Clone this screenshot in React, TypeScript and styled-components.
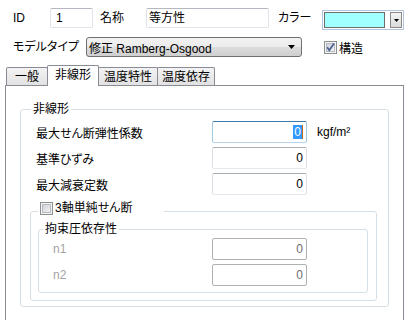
import React from 'react';
import styled, { createGlobalStyle } from 'styled-components';

const GlobalStyle = createGlobalStyle`
  html, body {
    margin: 0;
    padding: 0;
    background: #fff;
  }

  body {
    font-family: 'Liberation Sans', 'Noto Sans CJK JP', sans-serif;
    font-size: 12px;
    font-feature-settings: 'palt';
    color: #000;
  }
`;

type FieldState = 'normal' | 'focused' | 'disabled';

function CheckBox({ checked }: { checked?: boolean }) {
  return (
    <svg width='13' height='13' viewBox='0 0 13 13'>
      <defs>
        <linearGradient id={checked ? 'cbOn' : 'cbOff'} x1='0' y1='0' x2='1' y2='1'>
          <stop offset='0' stopColor='#cbcfd5' />
          <stop offset='1' stopColor='#f6f6f6' />
        </linearGradient>
      </defs>
      <rect x='0.5' y='0.5' width='12' height='12' fill='#f4f4f4' stroke='#8e8f8f' />
      <rect x='2.5' y='2.5' width='8' height='8' fill={`url(#${checked ? 'cbOn' : 'cbOff'})`} stroke='#b8bcc2' />
      {checked && <path d='M3.2 6.2 L5.3 9.2 L10 2.6' fill='none' stroke='#4c5f92' strokeWidth='1.7' />}
    </svg>
  );
}

function DownArrow({ size }: { size: number }) {
  return (
    <svg width={size} height={Math.ceil(size / 2)} viewBox={`0 0 ${size} ${Math.ceil(size / 2)}`}>
      <path d={`M0 0 L${size} 0 L${size / 2} ${Math.ceil(size / 2)} Z`} fill='#000' />
    </svg>
  );
}

function Field({ value, state = 'normal' }: { value: string; state?: FieldState }) {
  return (
    <FieldBox $state={state}>
      {state === 'focused' ? (
        <>
          <Selected>{value}</Selected>
          <Caret />
        </>
      ) : (
        value
      )}
    </FieldBox>
  );
}

function App() {
  return (
    <Page>
      <GlobalStyle />
      <Header>
        <Row>
          <Caption $width={37}>ID</Caption>
          <TextBox $width={43} $indent={5}>1</TextBox>
          <Caption $width={53} $indent={7}>名称</Caption>
          <TextBox $width={123} $indent={2}>等方性</TextBox>
          <Caption $width={53} $indent={9}>カラー</Caption>
          <ColorPicker>
            <Swatch />
            <DropButton>
              <DownArrow size={5} />
            </DropButton>
          </ColorPicker>
        </Row>
        <Row $top={9}>
          <Caption $width={73}>モデルタイプ</Caption>
          <Combo>
            <span>修正 Ramberg-Osgood</span>
            <DownArrow size={7} />
          </Combo>
          <CheckLabel $indent={22}>
            <CheckBox checked />
            <span>構造</span>
          </CheckLabel>
        </Row>
      </Header>

      <Tabs>
        <TabStrip>
          <Tab $width={42}>一般</Tab>
          <Tab $width={52} $active>
            非線形
          </Tab>
          <Tab $width={60}>温度特性</Tab>
          <Tab $width={58}>温度依存</Tab>
        </TabStrip>
        <Panel>
          <Group $pad='5px 11px 5px 9px'>
            <Legend $offset={1}>非線形</Legend>
            <FieldList $indent={6}>
              <FieldRow>
                <FieldLabel $width={176}>最大せん断弾性係数</FieldLabel>
                <Field value='0' state='focused' />
                <Unit>kgf/m²</Unit>
              </FieldRow>
              <FieldRow>
                <FieldLabel $width={176}>基準ひずみ</FieldLabel>
                <Field value='0' />
              </FieldRow>
              <FieldRow>
                <FieldLabel $width={176}>最大減衰定数</FieldLabel>
                <Field value='0' />
              </FieldRow>
            </FieldList>

            <Group $pad='1px 8px 7px 7px' $top={6}>
              <CheckLegend>
                <CheckBox />
                <span>3軸単純せん断</span>
              </CheckLegend>
              <Group $pad='2px 4px 6px 4px'>
                <Legend>拘束圧依存性</Legend>
                <FieldList $indent={10}>
                  <FieldRow>
                    <FieldLabel $width={159} $disabled>
                      n1
                    </FieldLabel>
                    <Field value='0' state='disabled' />
                  </FieldRow>
                  <FieldRow>
                    <FieldLabel $width={159} $disabled>
                      n2
                    </FieldLabel>
                    <Field value='0' state='disabled' />
                  </FieldRow>
                </FieldList>
              </Group>
            </Group>
          </Group>
        </Panel>
      </Tabs>
    </Page>
  );
}

export default App;

const Page = styled.div`
  width: 409px;
  height: 320px;
  overflow: hidden;
  background: #fff;
`;

const Header = styled.div`
  padding: 8px 0 0 13px;
`;

const Row = styled.div<{ $top?: number }>`
  display: flex;
  align-items: center;
  height: 20px;
  margin-top: ${(p) => p.$top ?? 0}px;
`;

const Caption = styled.span<{ $width: number; $indent?: number }>`
  box-sizing: border-box;
  width: ${(p) => p.$width}px;
  padding-left: ${(p) => p.$indent ?? 0}px;
  line-height: 20px;
  white-space: nowrap;
`;

const TextBox = styled.div<{ $width: number; $indent: number }>`
  box-sizing: border-box;
  width: ${(p) => p.$width}px;
  height: 20px;
  padding-left: ${(p) => p.$indent}px;
  border: 1px solid #dfe3ea;
  border-top-color: #b5b8c0;
  border-radius: 2px;
  line-height: 18px;
  white-space: nowrap;
`;

const ColorPicker = styled.div`
  box-sizing: border-box;
  display: flex;
  align-self: flex-start;
  width: 82px;
  height: 20px;
  margin-top: 2px;
  padding: 1px;
  border: 1px solid #b4c4dc;
`;

const Swatch = styled.div`
  box-sizing: border-box;
  width: 61px;
  border: 1px solid #6d6d6d;
  background: #a0ffff;
`;

const DropButton = styled.div`
  box-sizing: border-box;
  display: flex;
  align-items: center;
  justify-content: center;
  width: 12px;
  margin-left: 5px;
  border: 1px solid #8a8a8a;
  background: linear-gradient(#f4f4f4, #dadada);
`;

const Combo = styled.div`
  box-sizing: border-box;
  display: flex;
  align-items: center;
  justify-content: space-between;
  width: 216px;
  height: 20px;
  padding: 0 6px 0 2px;
  border: 1px solid #707070;
  border-radius: 3px;
  background: linear-gradient(#f2f2f2 0%, #ebebeb 50%, #dddddd 51%, #cfcfcf 100%);
  white-space: nowrap;
`;

const CheckLabel = styled.label<{ $indent: number }>`
  display: flex;
  align-items: center;
  gap: 2px;
  margin-left: ${(p) => p.$indent}px;
  user-select: none;
`;

const Tabs = styled.div`
  width: 399px;
  margin: 8px 0 0 5px;
`;

const TabStrip = styled.div`
  display: flex;
  align-items: flex-end;
  height: 20px;
  padding-left: 1px;
`;

const Tab = styled.div<{ $width: number; $active?: boolean }>`
  position: relative;
  z-index: ${(p) => (p.$active ? 1 : 0)};
  box-sizing: border-box;
  width: ${(p) => p.$width}px;
  height: ${(p) => (p.$active ? 21 : 18)}px;
  margin: 0 0 ${(p) => (p.$active ? -1 : 0)}px -1px;
  padding-top: 1px;
  border: 1px solid #898c95;
  border-bottom: none;
  border-radius: 2px 2px 0 0;
  background: ${(p) => (p.$active ? '#fff' : 'linear-gradient(#f3f3f3, #e2e2e2)')};
  line-height: ${(p) => (p.$active ? 16 : 17)}px;
  text-align: center;
  white-space: nowrap;

  &:first-child {
    margin-left: 0;
  }
`;

const Panel = styled.div`
  min-height: 240px;
  padding: 16px 14px 0 14px;
  border: 1px solid #898c95;
  border-bottom: none;
`;

const Group = styled.fieldset<{ $pad: string; $top?: number }>`
  min-width: 0;
  margin: ${(p) => p.$top ?? 0}px 0 0 0;
  padding: ${(p) => p.$pad};
  border: 1px solid #d5dfe5;
  border-radius: 3px;
`;

const Legend = styled.legend<{ $offset?: number }>`
  margin-left: ${(p) => p.$offset ?? 0}px;
  padding: 0 2px;
  line-height: 14px;
`;

const CheckLegend = styled.legend`
  box-sizing: border-box;
  display: flex;
  align-items: center;
  gap: 2px;
  width: 126px;
  height: 20px;
  padding: 0 2px 6px 2px;
  line-height: 14px;
`;

const FieldList = styled.div<{ $indent: number }>`
  display: flex;
  flex-direction: column;
  gap: 4px;
  padding-left: ${(p) => p.$indent}px;
`;

const FieldRow = styled.div`
  display: flex;
  align-items: center;
  height: 22px;
`;

const FieldLabel = styled.span<{ $width: number; $disabled?: boolean }>`
  width: ${(p) => p.$width}px;
  flex-shrink: 0;
  color: ${(p) => (p.$disabled ? '#a3a3a3' : '#000')};
  white-space: nowrap;
`;

const FieldBox = styled.div<{ $state: FieldState }>`
  box-sizing: border-box;
  display: flex;
  align-items: center;
  justify-content: flex-end;
  width: 95px;
  height: 22px;
  padding-right: 3px;
  border: 1px solid;
  border-radius: 2px;
  border-color: ${(p) =>
    p.$state === 'focused' ? '#3d7bad #a4c9e3 #b7d5ec #a4c9e3' : p.$state === 'disabled' ? '#adb2b5' : '#abadb3 #dbdfe6 #e3e9ef #dbdfe6'};
  color: ${(p) => (p.$state === 'disabled' ? '#6d6d6d' : '#000')};
  background: #fff;
`;

const Selected = styled.span`
  padding: 0 1px;
  background: #3399ff;
  color: #fff;
  line-height: 14px;
`;

const Caret = styled.span`
  width: 1px;
  height: 14px;
  background: #c26a1c;
`;

const Unit = styled.span`
  margin-left: 10px;
  white-space: nowrap;
`;
